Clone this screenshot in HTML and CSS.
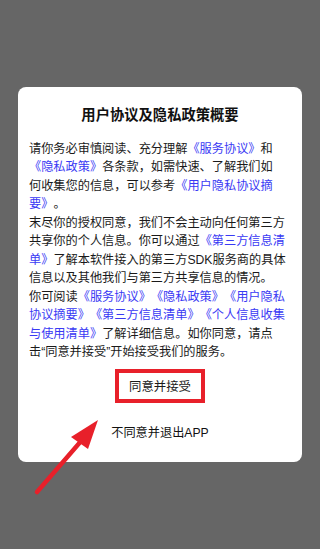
FILE: index.html
```html
<!DOCTYPE html>
<html lang="zh-CN">
<head>
<meta charset="utf-8">
<title>用户协议及隐私政策概要</title>
<link rel="stylesheet" href="styles.css">
</head>
<body>
<div class="dialog">
  <h1 class="title">用户协议及隐私政策概要</h1>
  <div class="content">
    <p class="para">请你务必审慎阅读、充分理解<a class="link">《服务协议》</a>和<br><a class="link">《隐私政策》</a>各条款，如需快速、了解我们如<br>何收集您的信息，可以参考<a class="link">《用户隐私协议摘<br>要》</a>。</p>
    <p class="para">末尽你的授权同意，我们不会主动向任何第三方<br>共享你的个人信息。你可以通过<a class="link">《第三方信息清<br>单》</a>了解本软件接入的第三方SDK服务商的具体<br>信息以及其他我们与第三方共享信息的情况。</p>
    <p class="para">你可阅读<a class="link">《服务协议》</a><a class="link">《隐私政策》</a><a class="link">《用户隐私<br>协议摘要》</a><a class="link">《第三方信息清单》</a><a class="link">《个人信息收集<br>与使用清单》</a>了解详细信息。如你同意，请点<br>击“同意并接受”开始接受我们的服务。</p>
  </div>
  <div class="actions">
    <div class="btn-accept">同意并接受</div>
    <div class="btn-exit">不同意并退出APP</div>
  </div>
</div>
<svg class="arrow" viewBox="0 0 320 549" width="320" height="549" aria-hidden="true">
  <line x1="37" y1="492" x2="82" y2="440" stroke="#e8202a" stroke-width="4.5" stroke-linecap="round"/>
  <polygon points="98,420 71,437 88,449" fill="#e8202a"/>
</svg>
</body>
</html>
```
FILE: styles.css
```css
html, body {
  margin: 0;
  padding: 0;
}
body {
  width: 320px;
  height: 549px;
  overflow: hidden;
  background: #666666;
  padding: 87px 18px 0;
  box-sizing: border-box;
  font-family: "Liberation Sans", "Noto Sans CJK SC", sans-serif;
  text-spacing-trim: space-all;
  position: relative;
}
.dialog {
  width: 284px;
  background: #ffffff;
  border-radius: 8px;
  padding: 18px 11px 19px;
  box-sizing: border-box;
}
.title {
  margin: 0;
  font-size: 14.3px;
  line-height: 20px;
  font-weight: bold;
  color: #111111;
  text-align: center;
}
.content {
  margin-top: 15px;
}
.para {
  margin: 0;
  font-size: 12.2px;
  line-height: 18.45px;
  color: #1a1a1a;
  white-space: nowrap;
}
.link {
  color: #3a3af4;
  text-decoration: none;
}
.actions {
  display: flex;
  flex-direction: column;
  align-items: center;
}
.btn-accept {
  margin-top: 8px;
  width: 90px;
  height: 34px;
  box-sizing: border-box;
  border: 4px solid #e8202a;
  display: flex;
  align-items: center;
  justify-content: center;
  font-size: 12.4px;
  color: #1a1a1a;
}
.btn-exit {
  margin-top: 20px;
  font-size: 12.2px;
  line-height: 20px;
  color: #111111;
}
.arrow {
  position: absolute;
  left: 0;
  top: 0;
  pointer-events: none;
}
```
